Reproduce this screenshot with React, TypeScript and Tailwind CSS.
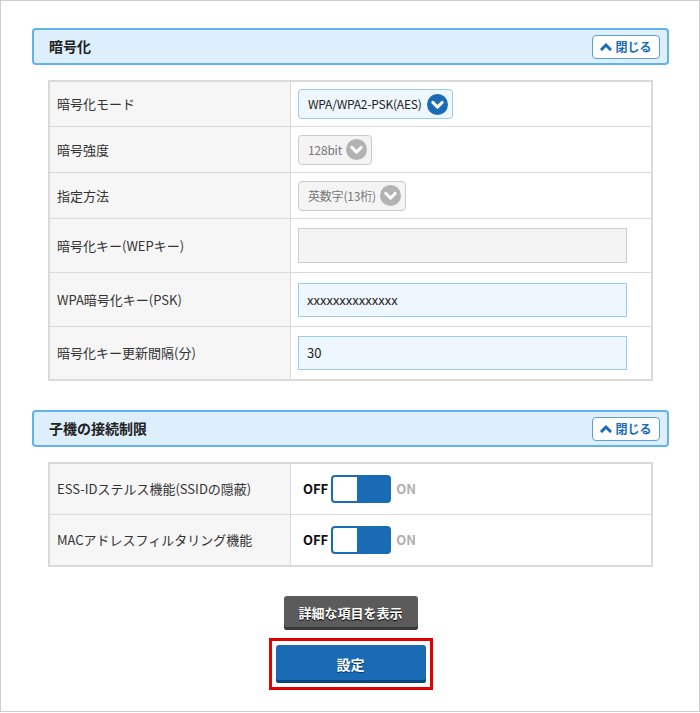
import React from 'react';

function CaretUp() {
  return (
    <svg className="w-[12px] h-[9px]" viewBox="0 0 12 9" fill="none" stroke="#1a6bb5" strokeWidth="3" strokeLinecap="square" strokeLinejoin="miter">
      <polyline points="2 7 6 3 10 7" />
    </svg>
  );
}

function CloseButton() {
  return (
    <button className="flex items-center justify-center gap-[3px] w-[68px] h-[24px] rounded-[4px] border border-[#5c9fd9] bg-white text-[12px] font-bold text-[#1a6bb5]">
      <CaretUp />
      閉じる
    </button>
  );
}

function SectionHeader({ title }: { title: string }) {
  return (
    <div className="flex items-center justify-between h-[37px] rounded-[4px] border-2 border-[#62b2ef] bg-[#ddeefc] pl-[15px] pr-[7px]">
      <span className="text-[14px] font-bold text-[#222]">{title}</span>
      <CloseButton />
    </div>
  );
}

function Chevron({ color }: { color: string }) {
  return (
    <svg className="w-[21px] h-[21px] shrink-0" viewBox="0 0 20 20">
      <circle cx="10" cy="10" r="10" fill={color} />
      <polyline points="5.5 8 10 12.5 14.5 8" fill="none" stroke="#fff" strokeWidth="2.8" strokeLinecap="round" strokeLinejoin="round" />
    </svg>
  );
}

function Select({ label, disabled }: { label: string; disabled?: boolean }) {
  return (
    <div
      className={
        disabled
          ? 'flex items-center gap-[4px] h-[30px] rounded-[4px] border border-[#cccccc] bg-[#f4f4f4] pl-[9px] pr-[4px] text-[12px] tracking-[-0.2px] whitespace-nowrap text-[#777]'
          : 'flex items-center gap-[5px] h-[30px] rounded-[4px] border border-[#9dcbee] bg-[#eef6fe] pl-[9px] pr-[4px] text-[12px] tracking-[-0.2px] whitespace-nowrap text-[#222]'
      }
    >
      <span>{label}</span>
      <Chevron color={disabled ? '#b3b3b3' : '#1a6bb5'} />
    </div>
  );
}

function Row({ label, h, first, children }: { label: string; h: string; first?: boolean; children: React.ReactNode }) {
  return (
    <div className={`flex ${h} ${first ? '' : 'border-t border-[#dadada]'}`}>
      <div className="flex items-center w-[241px] shrink-0 bg-[#f6f6f6] border-r border-[#dadada] pl-[7px] text-[13px] text-[#333]">
        {label}
      </div>
      <div className="flex items-center flex-1 pl-[7px]">{children}</div>
    </div>
  );
}

function Toggle() {
  return (
    <div className="flex items-center ml-[5px]">
      <span className="text-[13px] font-bold text-[#111] mr-[3px]">OFF</span>
      <div className="flex w-[60px] h-[28px] rounded-[4px] bg-[#1a6bb5] p-[2px]">
        <div className="w-[24px] h-full rounded-l-[2px] bg-white" />
      </div>
      <span className="text-[13px] font-bold text-[#b0b0b0] ml-[5px]">ON</span>
    </div>
  );
}

export default function App() {
  return (
    <div className="w-[700px] h-[712px] border border-[#cfcfcf] bg-white pt-[27px] pl-[31px] pr-[30px] font-['Noto_Sans_CJK_JP','Noto_Sans',sans-serif]">
      <SectionHeader title="暗号化" />
      <div className="mx-[16px] mt-[15px] border-2 border-[#dadada]">
        <Row label="暗号化モード" h="h-[44px]" first>
          <Select label="WPA/WPA2-PSK(AES)" />
        </Row>
        <Row label="暗号強度" h="h-[46px]">
          <Select label="128bit" disabled />
        </Row>
        <Row label="指定方法" h="h-[46px]">
          <Select label="英数字(13桁)" disabled />
        </Row>
        <Row label="暗号化キー(WEPキー)" h="h-[54px]">
          <div className="w-[329px] h-[35px] border border-[#cccccc] bg-[#f4f4f4]" />
        </Row>
        <Row label="WPA暗号化キー(PSK)" h="h-[54px]">
          <div className="flex items-center w-[329px] h-[34px] border border-[#9dcbee] bg-[#eef6fe] pl-[8px] text-[13px] text-[#222]">
            xxxxxxxxxxxxxx
          </div>
        </Row>
        <Row label="暗号化キー更新間隔(分)" h="h-[53px]">
          <div className="flex items-center w-[329px] h-[34px] border border-[#9dcbee] bg-[#eef6fe] pl-[8px] text-[13px] text-[#222]">
            30
          </div>
        </Row>
      </div>

      <div className="mt-[29px]">
        <SectionHeader title="子機の接続制限" />
      </div>
      <div className="mx-[16px] mt-[15px] border-2 border-[#dadada]">
        <Row label="ESS-IDステルス機能(SSIDの隠蔽)" h="h-[50px]" first>
          <Toggle />
        </Row>
        <Row label="MACアドレスフィルタリング機能" h="h-[51px]">
          <Toggle />
        </Row>
      </div>

      <div className="flex flex-col items-center mt-[29px]">
        <button className="w-[134px] h-[34px] rounded-[3px] bg-[#5b5b5b] shadow-[inset_0_-3px_0_#3a3a3a] text-[13px] font-bold text-white [text-shadow:0_1px_1px_#000]">
          詳細な項目を表示
        </button>
        <div className="mt-[8px] p-[4px] border-[3px] border-[#e50000]">
          <button className="w-[150px] h-[38px] rounded-[3px] bg-[#1a6bb5] shadow-[inset_0_-3px_0_#0c4580] text-[14px] font-bold text-white [text-shadow:0_1px_1px_#0a3560]">
            設定
          </button>
        </div>
      </div>
    </div>
  );
}
